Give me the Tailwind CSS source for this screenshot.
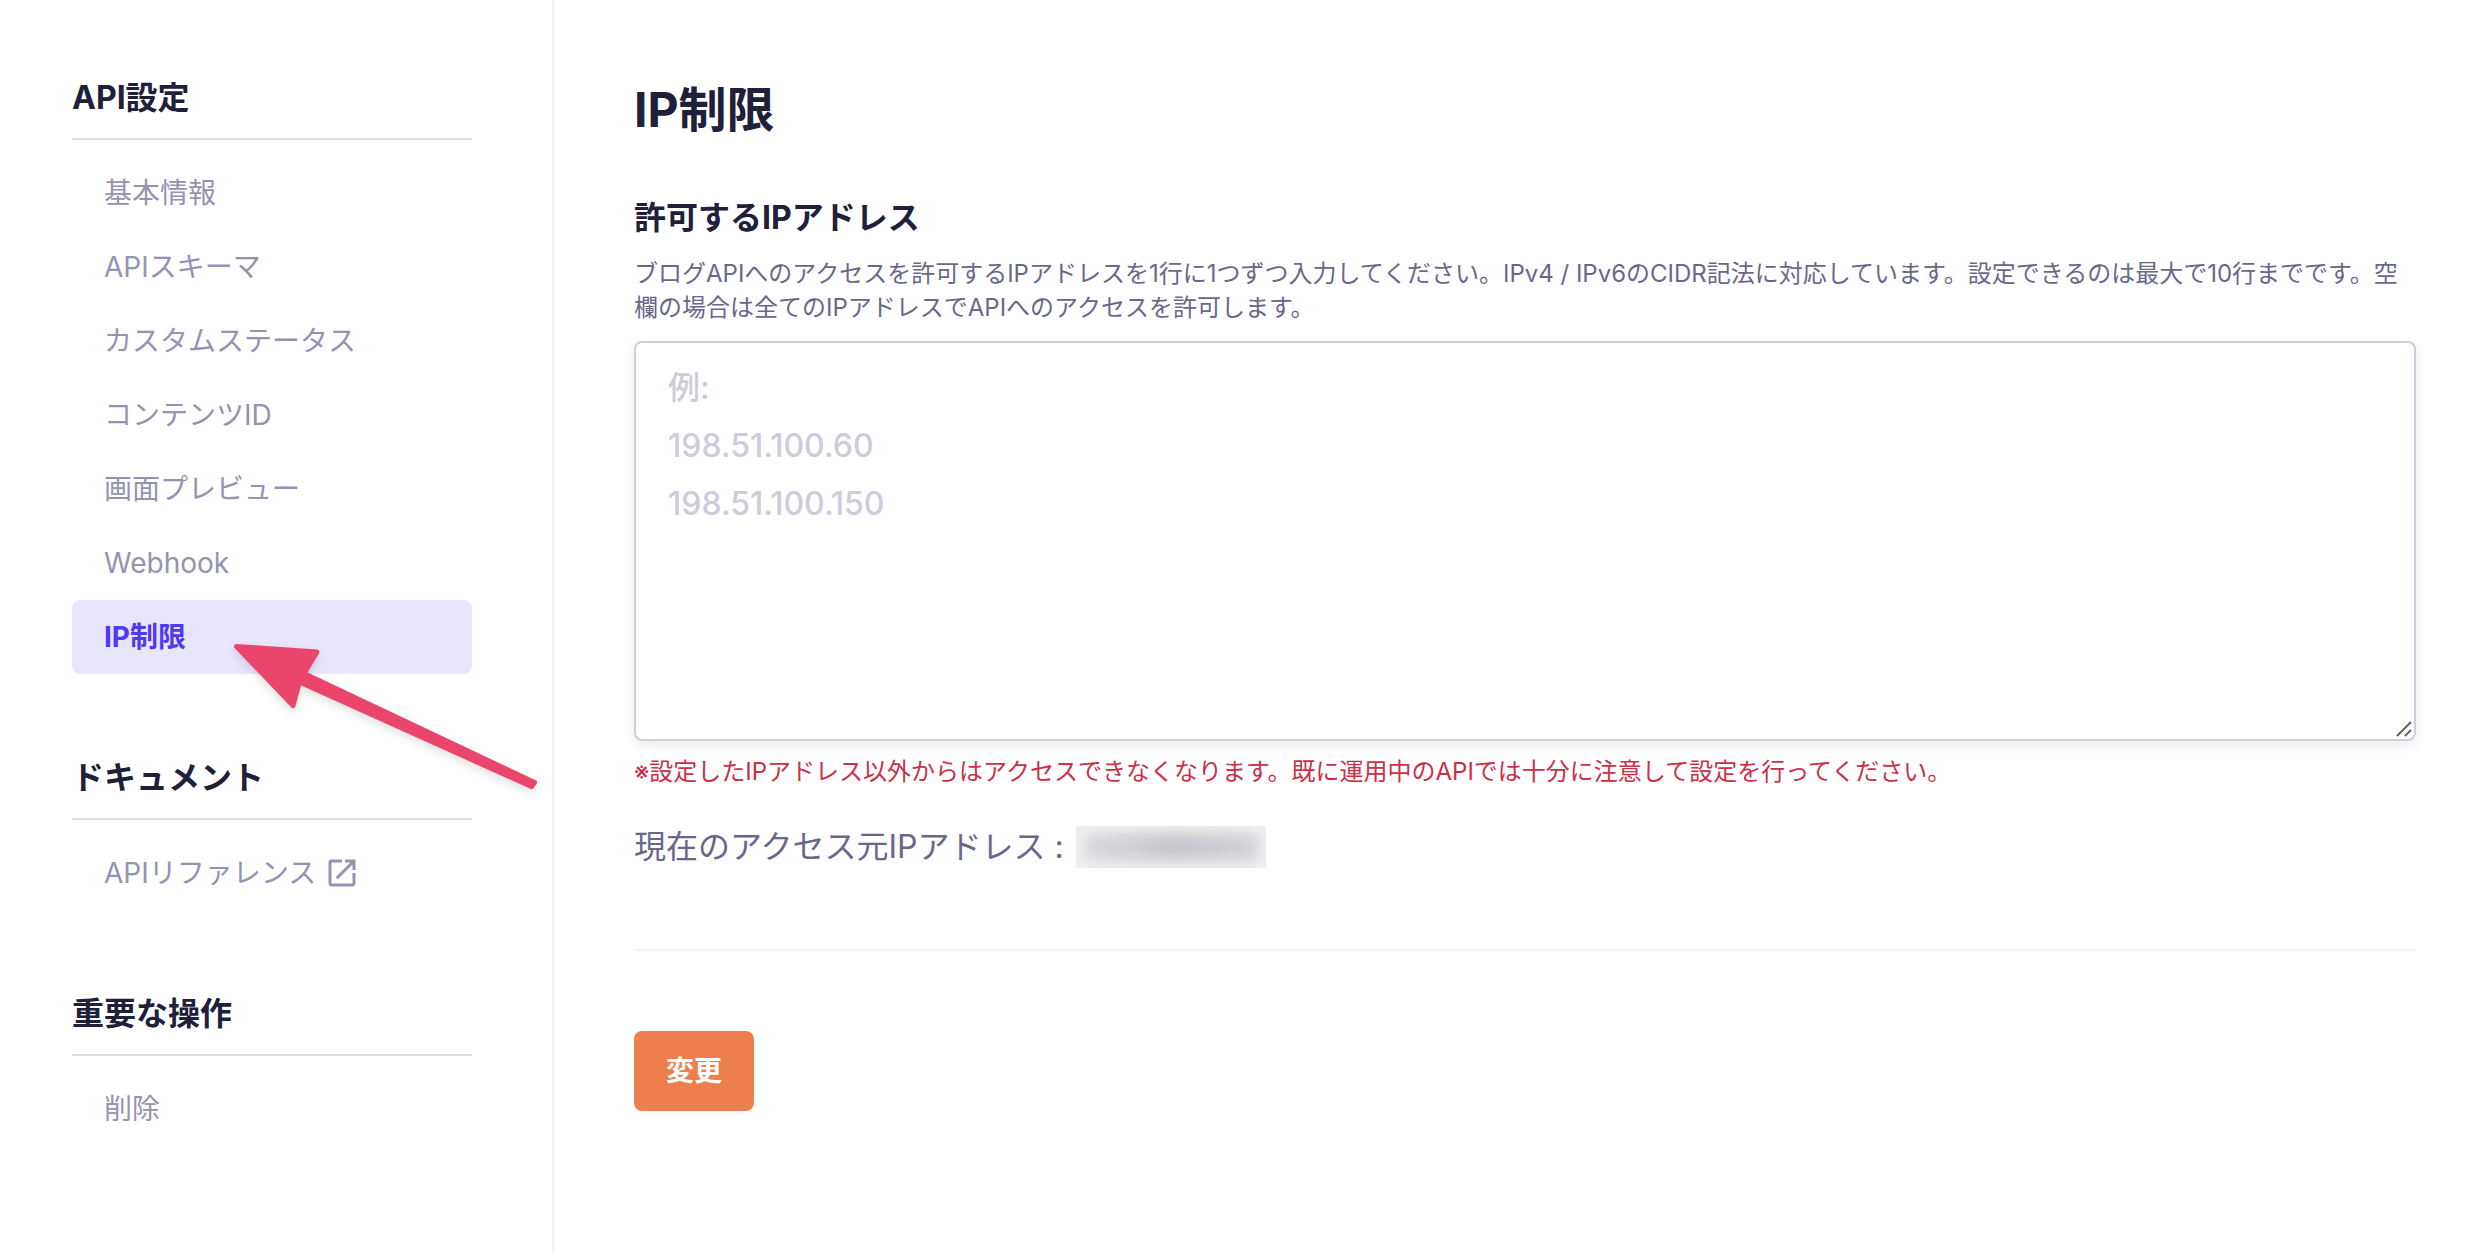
<!doctype html>
<html lang="ja">
    <head>
        <meta charset="UTF-8" />
        <meta name="viewport" content="width=device-width, initial-scale=1.0" />
        <title>IP制限 | API設定</title>
        <script src="https://cdn.jsdelivr.net/npm/@tailwindcss/browser@4"></script>
    </head>
    <body class="bg-white font-['Inter','Noto_Sans_CJK_JP',sans-serif] text-[#21203a]">
    <div class="flex min-h-screen">

        <!-- Sidebar -->
        <aside class="relative w-[554px] shrink-0 border-r-2 border-[#f3f3fa] pt-[74px] pr-20 pl-[72px]">
            <nav class="flex flex-col gap-20" aria-label="API設定">
                <section>
                    <h2 class="border-b-2 border-[#dcdcdc] pb-4 text-[32px] leading-[48px] font-bold">API設定</h2>
                    <ul class="mt-4 text-[28px] leading-[42px] text-[#9493b1]">
                        <li><a href="#basic" class="block rounded-lg px-8 py-4">基本情報</a></li>
                        <li><a href="#schema" class="block rounded-lg px-8 py-4">APIスキーマ</a></li>
                        <li><a href="#status" class="block rounded-lg px-8 py-4">カスタムステータス</a></li>
                        <li><a href="#content-id" class="block rounded-lg px-8 py-4">コンテンツID</a></li>
                        <li><a href="#preview" class="block rounded-lg px-8 py-4">画面プレビュー</a></li>
                        <li><a href="#webhook" class="block rounded-lg px-8 py-4">Webhook</a></li>
                        <li><a href="#ip" aria-current="page" class="block rounded-lg bg-[#e8e6fc] px-8 py-4 font-bold text-[#5038f5]">IP制限</a></li>
                    </ul>
                </section>

                <section>
                    <h2 class="border-b-2 border-[#dcdcdc] pb-4 text-[32px] leading-[48px] font-bold">ドキュメント</h2>
                    <ul class="mt-4 text-[28px] leading-[42px] text-[#9493b1]">
                        <li>
                            <a href="#reference" class="flex items-center gap-2 rounded-lg px-8 py-4">
                                APIリファレンス
                                <svg class="size-9" viewBox="0 0 24 24" fill="currentColor" aria-hidden="true">
                                    <path d="M19 19H5V5h7V3H5a2 2 0 0 0-2 2v14a2 2 0 0 0 2 2h14c1.1 0 2-.9 2-2v-7h-2v7zM14 3v2h3.59l-9.83 9.83 1.41 1.41L19 6.41V10h2V3h-7z" />
                                </svg>
                            </a>
                        </li>
                    </ul>
                </section>

                <section>
                    <h2 class="border-b-2 border-[#dcdcdc] pb-4 text-[32px] leading-[48px] font-bold">重要な操作</h2>
                    <ul class="mt-4 text-[28px] leading-[42px] text-[#9493b1]">
                        <li><a href="#delete" class="block rounded-lg px-8 py-4">削除</a></li>
                    </ul>
                </section>
            </nav>

            <!-- Arrow pointing at the active item -->
            <svg class="pointer-events-none absolute top-[630px] left-[220px] h-[170px] w-[330px] drop-shadow-[0_4px_4px_rgba(0,0,0,0.12)]" viewBox="220 630 330 170" fill="#ea466c" stroke="#ea466c" stroke-linejoin="round" aria-hidden="true">
                <path stroke-width="5" d="M236.500 646.500L317 652L304 673.500L534.500 782.500L531.500 786.500L299.500 682L293 705.500Z" />
            </svg>
        </aside>

        <!-- Content -->
        <main class="min-w-0 flex-1 pt-[74px] pr-16 pl-20">
            <h1 class="text-5xl leading-[72px] font-bold">IP制限</h1>
            <form class="mt-12">
                <label for="allowedIps" class="block text-[32px] leading-[48px] font-bold">許可するIPアドレス</label>
                <p id="allowedIpsHelp" class="mt-[15px] text-2xl leading-[34px] text-[#69688b]">ブログAPIへのアクセスを許可するIPアドレスを1行に1つずつ入力してください。IPv4 / IPv6のCIDR記法に対応しています。設定できるのは最大で10行までです。空欄の場合は全てのIPアドレスでAPIへのアクセスを許可します。</p>
                <div class="relative mt-4">
                    <textarea id="allowedIps" aria-describedby="allowedIpsHelp" placeholder="例:&#10;198.51.100.60&#10;198.51.100.150" class="block h-[400px] w-full resize-y rounded-lg border-2 border-[#cfcce0] px-8 py-4 text-[32px] leading-[58px] font-medium shadow-[0_4px_12px_rgba(0,0,0,0.08)] placeholder:text-[#cdccda] [&::-webkit-resizer]:hidden"></textarea>
                    <svg class="pointer-events-none absolute right-1 bottom-1 size-4" viewBox="0 0 16 16" stroke="#626262" stroke-width="2" aria-hidden="true">
                        <path d="M1 15L15 1M9 15L15 9" />
                    </svg>
                </div>
                <p class="mt-[13px] text-2xl leading-[36px] text-[#cb3048]">※設定したIPアドレス以外からはアクセスできなくなります。既に運用中のAPIでは十分に注意して設定を行ってください。</p>
                <p class="mt-[33px] flex items-center gap-3 text-[32px] leading-[48px] text-[#69688b]">
                    現在のアクセス元IPアドレス :
                    <!-- masked address -->
                    <span class="block h-[42px] w-[190px] overflow-hidden bg-[#f1f1f2] p-2">
                        <span class="block h-full bg-linear-to-r from-[#d8d8dc] via-[#c2c1c8] to-[#cfced6] blur-sm"></span>
                    </span>
                </p>
                <hr class="mt-[78px] border-t-2 border-[#f3f3f8]" />
                <button type="submit" class="mt-20 rounded-lg bg-[#ed7f4e] px-8 py-[19px] text-[28px] leading-[42px] font-bold text-white">変更</button>
            </form>
        </main>
    </div>
    </body>
</html>
